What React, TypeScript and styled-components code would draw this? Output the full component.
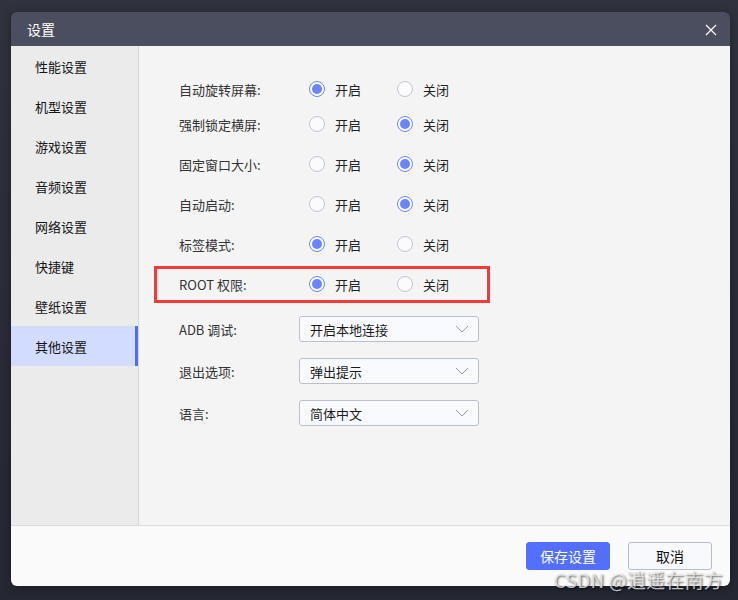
import styled, { createGlobalStyle } from 'styled-components';

const GlobalStyle = createGlobalStyle`
    html, body {
        margin: 0;
        padding: 0;
    }
    body {
        background: linear-gradient(180deg, #30333d 0%, #2a2d37 50%, #252832 100%);
        font-family: "Noto Sans CJK SC", "Noto Sans", sans-serif;
        width: 738px;
        height: 600px;
        overflow: hidden;
    }
`;

const Page = styled.div`
    position: relative;
    box-sizing: border-box;
    width: 738px;
    height: 600px;
    padding: 12px 8px 14px 11px;
`;

const Dialog = styled.div`
    display: flex;
    flex-direction: column;
    height: 100%;
    border-radius: 6px;
    overflow: hidden;
    box-shadow: 0 2px 10px rgba(0, 0, 0, 0.35);
`;

const TitleBar = styled.div`
    height: 34px;
    flex: none;
    display: flex;
    align-items: center;
    justify-content: space-between;
    padding: 0 11px 0 16px;
    background: #4a4e5e;
    color: #ffffff;
    font-size: 14px;
`;

const CloseButton = styled.div`
    width: 16px;
    height: 16px;
    display: flex;
    align-items: center;
    justify-content: center;
    margin-top: 1px;
`;

const Body = styled.div`
    flex: 1;
    display: flex;
    min-height: 0;
`;

const Sidebar = styled.div`
    width: 127px;
    flex: none;
    background: #ebebeb;
    border-right: 1px solid #d8d8d8;
`;

const NavItem = styled.div<{ $active?: boolean }>`
    height: 40px;
    display: flex;
    align-items: center;
    padding-left: 24px;
    font-size: 13px;
    color: #151515;
    background: ${p => (p.$active ? '#d2dcff' : 'transparent')};
    box-shadow: ${p => (p.$active ? 'inset -3px 0 0 #4f6dfd' : 'none')};
`;

const Content = styled.div`
    flex: 1;
    background: #f4f4f4;
    padding: 23px 0 0 15px;
`;

const Row = styled.div<{ $tight?: boolean; $highlight?: boolean }>`
    position: relative;
    height: 40px;
    width: 336px;
    display: flex;
    align-items: center;
    padding-left: 25px;
    box-sizing: border-box;
    margin-top: ${p => (p.$tight ? '-5px' : '0')};

    &::after {
        content: '';
        display: ${p => (p.$highlight ? 'block' : 'none')};
        position: absolute;
        left: 0;
        right: 0;
        top: 2px;
        bottom: 1px;
        border: 3px solid #f53a3a;
    }
`;

const SelectList = styled.div`
    margin-top: 4px;
`;

const SelectRow = styled.div`
    height: 42px;
    display: flex;
    align-items: center;
    padding-left: 25px;
`;

const Label = styled.div`
    width: 120px;
    flex: none;
    font-size: 13px;
    color: #333333;
`;

const RadioGroup = styled.div`
    display: flex;
    padding-left: 10px;
`;

const RadioOption = styled.div`
    width: 88px;
    display: flex;
    align-items: center;
    gap: 10px;
    font-size: 13px;
    color: #222222;
`;

const RadioCircle = styled.span<{ $checked?: boolean }>`
    box-sizing: border-box;
    width: 16px;
    height: 16px;
    border-radius: 50%;
    border: 1px solid ${p => (p.$checked ? '#6a85ff' : '#c2c5d6')};
    background: ${p => (p.$checked ? '#ffffff' : '#fbfbfe')};
    display: flex;
    align-items: center;
    justify-content: center;

    &::after {
        content: '';
        display: ${p => (p.$checked ? 'block' : 'none')};
        width: 10px;
        height: 10px;
        border-radius: 50%;
        background: #6a85ff;
    }
`;

const SelectBox = styled.div`
    box-sizing: border-box;
    width: 180px;
    height: 26px;
    display: flex;
    align-items: center;
    justify-content: space-between;
    padding: 0 9px 0 10px;
    border: 1px solid #bcbfd2;
    border-radius: 3px;
    background: #f9faff;
    font-size: 13px;
    color: #1a1a1a;
`;

const Footer = styled.div`
    height: 60px;
    flex: none;
    display: flex;
    align-items: center;
    justify-content: flex-end;
    gap: 18px;
    padding-right: 18px;
    background: #fafafa;
    border-top: 1px solid #dcdcdc;
`;

const Button = styled.div<{ $primary?: boolean }>`
    box-sizing: border-box;
    width: 84px;
    height: 28px;
    display: flex;
    align-items: center;
    justify-content: center;
    border-radius: 3px;
    font-size: 14px;
    color: ${p => (p.$primary ? '#ffffff' : '#111111')};
    background: ${p => (p.$primary ? '#5270fd' : '#f8f9fd')};
    border: 1px solid ${p => (p.$primary ? '#5270fd' : '#b8bbcc')};
`;

const Watermark = styled.div`
    position: absolute;
    right: 15px;
    bottom: 7px;
    font-family: "Noto Sans CJK SC", "Noto Sans", sans-serif;
    font-size: 19px;
    color: rgba(235, 235, 235, 0.8);
    text-shadow: 1px 1px 2px rgba(0, 0, 0, 0.65);
    letter-spacing: 0.2px;
`;

const Chevron = () => (
    <svg width="14" height="8" viewBox="0 0 14 8">
        <path d="M1 1 L7 7 L13 1" fill="none" stroke="#9a9cab" strokeWidth="1" />
    </svg>
);

const CloseIcon = () => (
    <svg width="12" height="12" viewBox="0 0 12 12">
        <path d="M1 1 L11 11 M11 1 L1 11" stroke="#ffffff" strokeWidth="1.2" />
    </svg>
);

const navItems = ['性能设置', '机型设置', '游戏设置', '音频设置', '网络设置', '快捷键', '壁纸设置', '其他设置'];

const radioRows: { label: string; on: boolean }[] = [
    { label: '自动旋转屏幕:', on: true },
    { label: '强制锁定横屏:', on: false },
    { label: '固定窗口大小:', on: false },
    { label: '自动启动:', on: false },
    { label: '标签模式:', on: true },
    { label: 'ROOT 权限:', on: true },
];

const selectRows = [
    { label: 'ADB 调试:', value: '开启本地连接' },
    { label: '退出选项:', value: '弹出提示' },
    { label: '语言:', value: '简体中文' },
];

const App = () => {
    return (
        <Page>
            <GlobalStyle />
            <Dialog>
                <TitleBar>
                    <span>设置</span>
                    <CloseButton>
                        <CloseIcon />
                    </CloseButton>
                </TitleBar>
                <Body>
                    <Sidebar>
                        {navItems.map(item => (
                            <NavItem key={item} $active={item === '其他设置'}>{item}</NavItem>
                        ))}
                    </Sidebar>
                    <Content>
                        {radioRows.map((row, i) => (
                            <Row key={row.label} $tight={i === 1} $highlight={i === 5}>
                                <Label>{row.label}</Label>
                                <RadioGroup>
                                    <RadioOption>
                                        <RadioCircle $checked={row.on} />
                                        开启
                                    </RadioOption>
                                    <RadioOption>
                                        <RadioCircle $checked={!row.on} />
                                        关闭
                                    </RadioOption>
                                </RadioGroup>
                            </Row>
                        ))}
                        <SelectList>
                            {selectRows.map(row => (
                                <SelectRow key={row.label}>
                                    <Label>{row.label}</Label>
                                    <SelectBox>
                                        <span>{row.value}</span>
                                        <Chevron />
                                    </SelectBox>
                                </SelectRow>
                            ))}
                        </SelectList>
                    </Content>
                </Body>
                <Footer>
                    <Button $primary>保存设置</Button>
                    <Button>取消</Button>
                </Footer>
            </Dialog>
            <Watermark>CSDN @逍遥在南方</Watermark>
        </Page>
    );
}

export default App;
